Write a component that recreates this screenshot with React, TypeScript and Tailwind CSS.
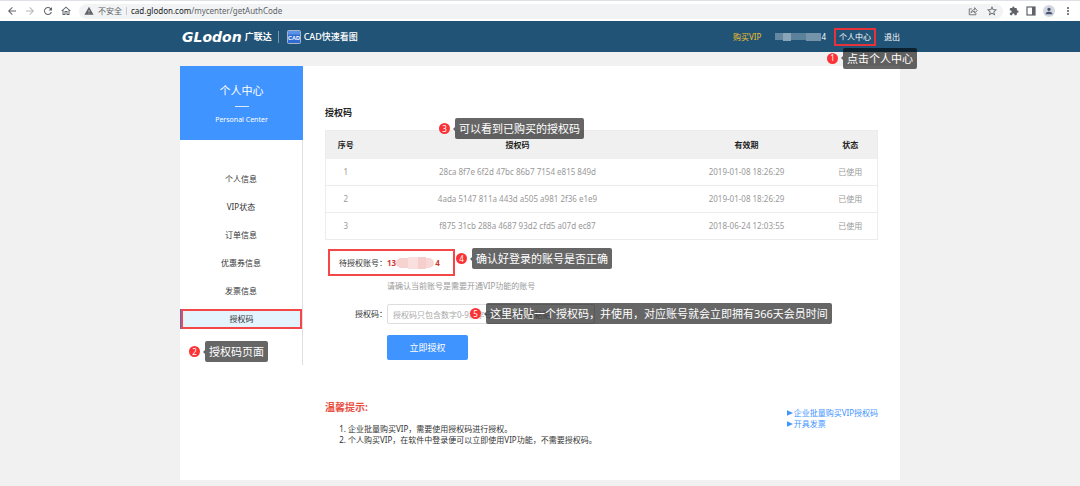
import { clsx } from 'clsx'
import {
  MdArrowBack,
  MdArrowForward,
  MdRefresh,
  MdOutlineHome,
  MdWarning,
  MdStarBorder,
  MdExtension,
  MdPerson,
  MdMoreVert,
} from 'react-icons/md'

interface CalloutProps {
  no: number
  text: string
  className?: string
}

const MENU = ['个人信息', 'VIP状态', '订单信息', '优惠券信息', '发票信息', '授权码']

const CODES = [
  { id: 1, code: '28ca 8f7e 6f2d 47bc 86b7 7154 e815 849d', date: '2019-01-08 18:26:29', status: '已使用' },
  { id: 2, code: '4ada 5147 811a 443d a505 a981 2f36 e1e9', date: '2019-01-08 18:26:29', status: '已使用' },
  { id: 3, code: 'f875 31cb 288a 4687 93d2 cfd5 a07d ec87', date: '2018-06-24 12:03:55', status: '已使用' },
]

/* Numbered red dot + dark bubble, always floats over the page */
function Callout({ no, text, className }: CalloutProps) {
  return (
    <div className={clsx('absolute z-10 flex items-center whitespace-nowrap', className)}>
      <span className="flex h-[11px] w-[11px] items-center justify-center rounded-full bg-[#fb3236] text-[8px] leading-none text-white">
        {no}
      </span>
      <span className="ml-[3px] h-0 w-0 border-y-2 border-r-2 border-y-transparent border-r-black/60" />
      <span className="h-[21px] rounded-[2px] bg-black/60 px-1 text-[11px] leading-[21px] text-white">{text}</span>
    </div>
  )
}

function ShareIcon() {
  return (
    <svg viewBox="0 0 24 24" className="h-[10px] w-[10px]" fill="none" stroke="currentColor" strokeWidth="2">
      <path d="M9 7H3v14h16v-4" />
      <path d="M7 16c1-5 4-7 9-7V4l6 7-6 6v-4c-4 0-7 1-9 3z" strokeLinejoin="round" />
    </svg>
  )
}

function PanelIcon() {
  return (
    <svg viewBox="0 0 20 20" className="h-[10px] w-[10px]">
      <rect x="2" y="2" width="16" height="16" fill="none" stroke="currentColor" strokeWidth="2.4" />
      <rect x="12" y="2" width="6" height="16" fill="currentColor" />
    </svg>
  )
}

function BrowserBar() {
  return (
    <div className="flex h-[21px] items-center border-t border-[#dee1e6] bg-white px-[6px] text-[#5f6368]">
      <div className="flex items-center gap-[6px]">
        <button aria-label="后退"><MdArrowBack className="h-3 w-3" /></button>
        <button aria-label="前进" className="text-[#b4b7ba]"><MdArrowForward className="h-3 w-3" /></button>
        <button aria-label="刷新"><MdRefresh className="h-3 w-3" /></button>
        <button aria-label="主页"><MdOutlineHome className="h-3 w-3" /></button>
      </div>
      <div className="ml-[7px] flex h-[15px] flex-1 items-center rounded-full bg-[#f1f3f4] px-[5px] text-[8px]">
        <MdWarning className="h-[10px] w-[10px]" />
        <span className="ml-1">不安全</span>
        <span className="mx-1 h-2 w-px bg-[#c8cacd]" />
        <span className="flex-1">
          <span className="text-[#202124]">cad.glodon.com</span>/mycenter/getAuthCode
        </span>
        <button aria-label="分享"><ShareIcon /></button>
        <button aria-label="收藏" className="ml-2"><MdStarBorder className="h-3 w-3" /></button>
      </div>
      <div className="ml-[6px] flex items-center gap-[7px]">
        <button aria-label="扩展程序"><MdExtension className="h-[10px] w-[10px]" /></button>
        <button aria-label="侧边栏"><PanelIcon /></button>
        <button aria-label="用户" className="flex h-3 w-3 items-center justify-center rounded-full bg-[#d3d7e0]">
          <MdPerson className="h-[10px] w-[10px] text-[#44546f]" />
        </button>
        <button aria-label="更多"><MdMoreVert className="h-3 w-3" /></button>
      </div>
    </div>
  )
}

function TopNav() {
  return (
    <header className="bg-[#205375] text-white">
      <div className="mx-auto flex h-[31px] max-w-[720px] items-center justify-between text-[8px]">
        <div className="flex items-center">
          <span className="pl-[2px] font-['DejaVu_Sans'] text-[14px] leading-none font-bold italic">GLodon</span>
          <span className="ml-[3px] text-[9px] font-bold">广联达</span>
          <span className="ml-[6px] h-3 w-px bg-white/40" />
          <svg viewBox="0 0 28 28" className="ml-2 h-[14px] w-[14px]">
            <rect x="1" y="1" width="26" height="26" rx="2" fill="#2f6bd0" stroke="#a9b4c6" strokeWidth="2" />
            <rect x="2" y="2" width="24" height="7" fill="#5b92e6" />
            <text x="14" y="19" textAnchor="middle" fontSize="11" fontWeight="700" fill="#fff" fontFamily="Liberation Sans">
              CAD
            </text>
          </svg>
          <span className="ml-[3px] text-[9px] font-medium">CAD快速看图</span>
        </div>
        <nav className="flex items-center">
          <a href="#vip" className="text-[#f2c12e]">购买VIP</a>
          {/* Masked phone number */}
          <span className="ml-[14px] flex items-center">
            <span className="h-[7px] w-2 bg-[#64889f]" />
            <span className="h-2 w-2 bg-[#8aa5b8]" />
            <span className="h-[7px] w-[15px] bg-[#5c829b]" />
            <span className="h-2 w-[15px] bg-[#7594aa]" />
            <span>4</span>
          </span>
          <div className="relative ml-2">
            <a href="#center" className="block border-2 border-[#e8323a] px-[3px] leading-[14px]">个人中心</a>
            <Callout no={1} text="点击个人中心" className="top-5 -left-[7px]" />
          </div>
          <a href="#logout" className="ml-2">退出</a>
        </nav>
      </div>
    </header>
  )
}

function Sidebar() {
  return (
    <aside className="w-[123px] shrink-0 self-start border-r border-[#e0e0e0] pb-9">
      <div className="-mr-px flex h-[74px] flex-col items-center bg-[#4094ff] pt-4 text-white">
        <h1 className="text-[11px] leading-[17px]">个人中心</h1>
        <span className="mt-[7px] h-px w-[14px] bg-white/80" />
        <p className="mt-[7px] text-[7px] leading-[12px]">Personal Center</p>
      </div>
      <ul className="flex flex-col gap-2 pt-[29px] text-center text-[8px] leading-[20px] text-[#333]">
        {MENU.map((item, i) => (
          <li key={item} className="relative">
            <a
              href="#menu"
              className={clsx(
                'block h-5',
                i === MENU.length - 1 &&
                  'border-l border-[#3f6fd0] bg-[#e3f4ff] inset-ring-2 inset-ring-[#f44747]',
              )}
            >
              {item}
            </a>
            {i === MENU.length - 1 && <Callout no={2} text="授权码页面" className="top-8 left-[9px]" />}
          </li>
        ))}
      </ul>
    </aside>
  )
}

function CodeTable() {
  return (
    <div className="relative mt-[10px]">
      <table className="w-full table-fixed border-collapse border border-[#ececec] text-center text-[8px]">
        <colgroup>
          <col className="w-10" />
          <col />
          <col className="w-[154px]" />
          <col className="w-[54px]" />
        </colgroup>
        <thead>
          <tr className="h-7 bg-[#f0f0f0] text-[#222]">
            <th>序号</th>
            <th>授权码</th>
            <th>有效期</th>
            <th>状态</th>
          </tr>
        </thead>
        <tbody>
          {CODES.map((row) => (
            <tr key={row.id} className="h-[27px] border-b border-[#ececec] text-[#999]">
              <td>{row.id}</td>
              <td>{row.code}</td>
              <td>{row.date}</td>
              <td>{row.status}</td>
            </tr>
          ))}
        </tbody>
      </table>
      <Callout no={3} text="可以看到已购买的授权码" className="-top-3 left-[114px]" />
    </div>
  )
}

function AuthForm() {
  return (
    <form className="text-[8px] text-[#333]" onSubmit={(e) => e.preventDefault()}>
      <div className="relative mt-3 flex h-[21px] items-center">
        <span className="w-[62px] text-right">待授权账号：</span>
        <span className="flex items-center font-bold text-[#cf3a30]">
          13
          <span className="flex items-center">
            <span className="h-[10px] w-3 rounded-l-full bg-[#f6d3d1]" />
            <span className="h-3 w-[10px] bg-[#f9e0de]" />
            <span className="h-3 w-2 bg-[#f5cfcd]" />
            <span className="h-[10px] w-2 rounded-r-full bg-[#f7d8d6]" />
          </span>
          <span className="ml-px">4</span>
        </span>
        <span className="absolute -top-[3px] left-[3px] h-[27px] w-[127px] border-2 border-[#f44747]" />
        <Callout no={4} text="确认好登录的账号是否正确" className="-top-1 left-[131px]" />
      </div>
      <p className="mt-[7px] ml-[62px] leading-[12px] text-[#999]">请确认当前账号是需要开通VIP功能的账号</p>
      <div className="relative mt-3 flex items-center">
        <label htmlFor="code" className="w-[62px] text-right">授权码：</label>
        <input
          id="code"
          type="text"
          placeholder="授权码只包含数字0-9和字母a-f，请直接粘贴"
          className="h-5 w-[208px] rounded-[2px] border border-[#ddd] px-[5px] placeholder:text-[#aaa]"
        />
        <Callout
          no={5}
          text="这里粘贴一个授权码，并使用，对应账号就会立即拥有366天会员时间"
          className="-top-px left-[145px]"
        />
      </div>
      <button type="submit" className="mt-[11px] ml-[62px] h-[25px] w-[81px] rounded-[2px] bg-[#4094ff] text-[9px] text-white">
        立即授权
      </button>
    </form>
  )
}

function Tips() {
  return (
    <div className="mt-10 flex items-start justify-between text-[8px] leading-[11px]">
      <div>
        <h3 className="text-[10px] leading-[14px] font-bold text-[#e8503f]">温馨提示:</h3>
        <ol className="mt-[9px] ml-[23px] list-decimal text-[#333]">
          <li>企业批量购买VIP，需要使用授权码进行授权。</li>
          <li>个人购买VIP，在软件中登录便可以立即使用VIP功能，不需要授权码。</li>
        </ol>
      </div>
      <ul className="mt-[7px] text-[#4094ff]">
        {['企业批量购买VIP授权码', '开具发票'].map((text) => (
          <li key={text}>
            <a href="#more" className="flex items-center gap-px">
              <svg viewBox="0 0 6 6" className="h-[6px] w-[6px] fill-current">
                <path d="M0 0.2L6 3L0 5.8z" />
              </svg>
              {text}
            </a>
          </li>
        ))}
      </ul>
    </div>
  )
}

export default function App() {
  return (
    <div className="min-h-screen bg-[#f1f1f1] font-['Noto_Sans','Noto_Sans_CJK_SC',sans-serif]" lang="zh-CN">
      <BrowserBar />
      <TopNav />
      <div className="mx-auto mt-[14px] flex max-w-[720px] bg-white">
        <Sidebar />
        <main className="min-w-0 flex-1 px-[22px] pt-10 pb-[35px]">
          <h2 className="text-[9px] leading-[14px] font-bold text-[#222]">授权码</h2>
          <CodeTable />
          <AuthForm />
          <Tips />
        </main>
      </div>
    </div>
  )
}
